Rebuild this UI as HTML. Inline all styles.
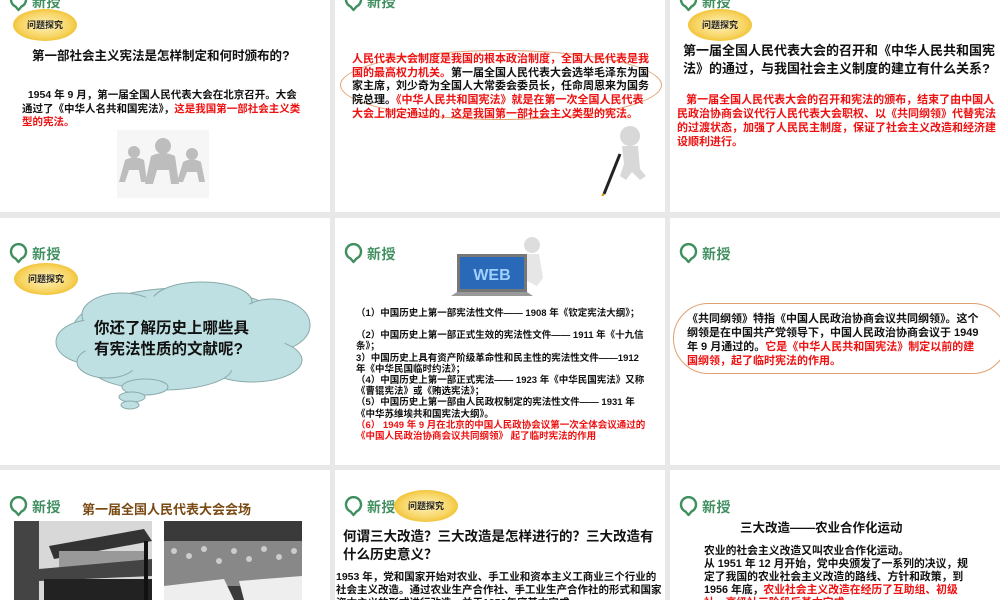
<!DOCTYPE html>
<html><head><meta charset="utf-8"><style>
*{margin:0;padding:0;box-sizing:border-box}
body{width:1000px;height:600px;background:#e8e8e8;position:relative;overflow:hidden;font-family:"Liberation Sans","Noto Sans CJK SC",sans-serif;font-weight:bold;color:#111}
.s{position:absolute;background:#fff;overflow:hidden}
.a{position:absolute}
.logo{position:absolute;width:60px;height:22px}
.logo svg{position:absolute;left:0;top:0}
.logo span{position:absolute;left:23px;top:1px;font-size:14px;color:#3f8f5f;letter-spacing:0.5px}
.badge{position:absolute;width:64px;height:32px;border-radius:50%;background:radial-gradient(ellipse at center,#fff3c0 0%,#f7d462 55%,#f0c030 75%,#fff 100%);font-size:9px;text-align:center;line-height:32px;color:#222}
.r{color:#e11}
p{position:absolute}
</style></head><body>

<!-- Slide A -->
<div class="s" style="left:0;top:0;width:330px;height:212px">
 <div class="logo" style="left:9px;top:-9px"><svg width="19" height="21" viewBox="0 0 19 21"><path d="M9.5 19 L6.5 15.5 A7.5 7.5 0 1 1 12.5 15.5 Z" fill="none" stroke="#3f8f5f" stroke-width="2.4" stroke-linejoin="round"/></svg><span>新授</span></div>
 <div class="badge" style="left:13px;top:9px">问题探究</div>
 <p style="left:32px;top:45px;font-size:12.5px;white-space:nowrap">第一部社会主义宪法是怎样制定和何时颁布的?</p>
 <p style="left:22px;top:89px;width:285px;font-size:10.5px;line-height:13.5px">&nbsp;&nbsp;1954 年 9 月，第一届全国人民代表大会在北京召开。大会通过了《中华人名共和国宪法》，<span class="r">这是我国第一部社会主义类型的宪法。</span></p>
 <svg class="a" style="left:117px;top:130px" width="92" height="68" viewBox="0 0 92 68"><rect width="92" height="68" fill="#f6f6f6"/>
 <g fill="#bdbdbd"><circle cx="17" cy="22" r="6"/><path d="M8 30 Q17 25 27 30 L30 52 L24 52 L22 40 L12 40 L8 52 L2 52 Z"/>
 <circle cx="46" cy="16" r="8"/><path d="M34 26 Q46 20 58 26 L62 54 L54 54 L52 40 L40 40 L36 54 L28 54 Z"/>
 <circle cx="75" cy="24" r="6"/><path d="M66 32 Q75 27 84 32 L88 52 L82 52 L80 42 L70 42 L66 52 L60 52 Z"/></g></svg>
</div>

<!-- Slide B -->
<div class="s" style="left:335px;top:0;width:330px;height:212px">
 <div class="logo" style="left:9px;top:-9px"><svg width="19" height="21" viewBox="0 0 19 21"><path d="M9.5 19 L6.5 15.5 A7.5 7.5 0 1 1 12.5 15.5 Z" fill="none" stroke="#3f8f5f" stroke-width="2.4" stroke-linejoin="round"/></svg><span>新授</span></div>
 <div class="a" style="left:5px;top:50px;width:322px;height:70px;border:1px solid #e0a070;border-radius:50%"></div>
 <p style="left:17px;top:53px;width:300px;font-size:11px;line-height:13.7px"><span class="r">人民代表大会制度是我国的根本政治制度，全国人民代表是我国的最高权力机关。</span>第一届全国人民代表大会选举毛泽东为国家主席，刘少奇为全国人大常委会委员长，任命周恩来为国务院总理。<span class="r">《中华人民共和国宪法》就是在第一次全国人民代表大会上制定通过的，这是我国第一部社会主义类型的宪法。</span></p>
 <svg class="a" style="left:265px;top:124px" width="50" height="72" viewBox="0 0 50 72"><g fill="#d8d8d8"><circle cx="30" cy="12" r="10"/><path d="M22 22 L38 22 L40 45 L46 52 L40 56 L32 48 L26 56 L20 52 L24 40 Z"/></g><path d="M20 30 L4 70" stroke="#222" stroke-width="3"/><path d="M4 70 L2 72" stroke="#c90" stroke-width="2"/></svg>
</div>

<!-- Slide C -->
<div class="s" style="left:670px;top:0;width:330px;height:212px">
 <div class="logo" style="left:9px;top:-9px"><svg width="19" height="21" viewBox="0 0 19 21"><path d="M9.5 19 L6.5 15.5 A7.5 7.5 0 1 1 12.5 15.5 Z" fill="none" stroke="#3f8f5f" stroke-width="2.4" stroke-linejoin="round"/></svg><span>新授</span></div>
 <div class="badge" style="left:18px;top:9px">问题探究</div>
 <p style="left:13px;top:42px;width:312px;font-size:13px;line-height:18px">第一届全国人民代表大会的召开和《中华人民共和国宪法》的通过，与我国社会主义制度的建立有什么关系?</p>
 <p class="r" style="left:7px;top:93px;width:322px;font-size:11px;line-height:14px">&nbsp;&nbsp;&nbsp;第一届全国人民代表大会的召开和宪法的颁布，结束了由中国人民政治协商会议代行人民代表大会职权、以《共同纲领》代替宪法的过渡状态，加强了人民民主制度，保证了社会主义改造和经济建设顺利进行。</p>
</div>

<!-- Slide D -->
<div class="s" style="left:0;top:218px;width:330px;height:247px">
 <div class="logo" style="left:9px;top:25px"><svg width="19" height="21" viewBox="0 0 19 21"><path d="M9.5 19 L6.5 15.5 A7.5 7.5 0 1 1 12.5 15.5 Z" fill="none" stroke="#3f8f5f" stroke-width="2.4" stroke-linejoin="round"/></svg><span>新授</span></div>
 <div class="badge" style="left:14px;top:45px">问题探究</div>
 <svg class="a" style="left:52px;top:62px" width="262" height="132" viewBox="0 0 262 132"><g fill="#bfe0e2" stroke="#8aa" stroke-width="1">
 <ellipse cx="130" cy="52" rx="110" ry="44"/><ellipse cx="70" cy="35" rx="40" ry="22"/><ellipse cx="150" cy="22" rx="50" ry="20"/><ellipse cx="220" cy="45" rx="38" ry="26"/><ellipse cx="40" cy="62" rx="36" ry="22"/><ellipse cx="200" cy="80" rx="50" ry="22"/><ellipse cx="110" cy="88" rx="70" ry="22"/><ellipse cx="55" cy="82" rx="30" ry="16"/>
 <ellipse cx="93" cy="107" rx="23" ry="8"/><ellipse cx="80" cy="117" rx="13" ry="5"/><ellipse cx="78" cy="125" rx="9" ry="4"/></g>
 <ellipse cx="130" cy="55" rx="105" ry="40" fill="#bfe0e2"/></svg>
 <p style="left:94px;top:100px;font-size:15.5px;line-height:21px;width:170px">你还了解历史上哪些具有宪法性质的文献呢?</p>
</div>

<!-- Slide E -->
<div class="s" style="left:335px;top:218px;width:330px;height:247px">
 <div class="logo" style="left:9px;top:25px"><svg width="19" height="21" viewBox="0 0 19 21"><path d="M9.5 19 L6.5 15.5 A7.5 7.5 0 1 1 12.5 15.5 Z" fill="none" stroke="#3f8f5f" stroke-width="2.4" stroke-linejoin="round"/></svg><span>新授</span></div>
 <svg class="a" style="left:112px;top:18px" width="108" height="62" viewBox="0 0 108 62"><circle cx="85" cy="9" r="8" fill="#ddd"/><path d="M76 18 L92 18 L96 42 L90 50 L78 44 Z" fill="#e6e6e6"/><rect x="10" y="18" width="70" height="38" fill="#777"/><rect x="13" y="21" width="64" height="32" fill="#2a68b8"/><text x="45" y="44" font-size="16" font-family="Liberation Sans" font-weight="bold" fill="#9fd0ff" text-anchor="middle">WEB</text><path d="M4 60 L86 60 L80 56 L10 56 Z" fill="#999"/></svg>
 <div class="a" style="left:21px;top:90px;width:290px;font-size:9.5px;line-height:11.2px">
 <div>（1）中国历史上第一部宪法性文件—— 1908 年《钦定宪法大纲》；</div><div style="height:11px"></div>
 <div>（2）中国历史上第一部正式生效的宪法性文件—— 1911 年《十九信条》；</div>
 <div>3）中国历史上具有资产阶级革命性和民主性的宪法性文件——1912 年《中华民国临时约法》；</div>
 <div>（4）中国历史上第一部正式宪法—— 1923 年《中华民国宪法》又称《曹锟宪法》或《贿选宪法》；</div>
 <div>（5）中国历史上第一部由人民政权制定的宪法性文件—— 1931 年《中华苏维埃共和国宪法大纲》。</div>
 <div class="r">（6） 1949 年 9 月在北京的中国人民政协会议第一次全体会议通过的《中国人民政治协商会议共同纲领》 起了临时宪法的作用</div></div>
</div>

<!-- Slide F -->
<div class="s" style="left:670px;top:218px;width:330px;height:247px">
 <div class="logo" style="left:9px;top:25px"><svg width="19" height="21" viewBox="0 0 19 21"><path d="M9.5 19 L6.5 15.5 A7.5 7.5 0 1 1 12.5 15.5 Z" fill="none" stroke="#3f8f5f" stroke-width="2.4" stroke-linejoin="round"/></svg><span>新授</span></div>
 <div class="a" style="left:3px;top:85px;width:335px;height:71px;border:1px solid #e0a070;border-radius:36px"></div>
 <p style="left:17px;top:94px;width:298px;font-size:11px;line-height:14px">《共同纲领》特指《中国人民政治协商会议共同纲领》。这个纲领是在中国共产党领导下，中国人民政治协商会议于 1949 年 9 月通过的。<span class="r">它是《中华人民共和国宪法》制定以前的建国纲领，起了临时宪法的作用。</span></p>
</div>

<!-- Slide G -->
<div class="s" style="left:0;top:470px;width:330px;height:130px">
 <div class="logo" style="left:9px;top:26px"><svg width="19" height="21" viewBox="0 0 19 21"><path d="M9.5 19 L6.5 15.5 A7.5 7.5 0 1 1 12.5 15.5 Z" fill="none" stroke="#3f8f5f" stroke-width="2.4" stroke-linejoin="round"/></svg><span>新授</span></div>
 <p style="left:82px;top:29px;font-size:13px;color:#7a4a12;white-space:nowrap">第一届全国人民代表大会会场</p>
 <svg class="a" style="left:14px;top:51px" width="138" height="79" viewBox="0 0 138 79"><rect width="138" height="79" fill="#d8d8d8"/><rect x="0" y="0" width="25" height="79" fill="#444"/><path d="M35 25 L130 8 L138 20 L40 38 Z" fill="#333"/><rect x="45" y="30" width="85" height="20" fill="#999"/><path d="M25 48 L138 38 L138 55 L25 60 Z" fill="#444"/><rect x="30" y="58" width="108" height="21" fill="#222"/><rect x="130" y="20" width="4" height="59" fill="#111"/></svg>
 <svg class="a" style="left:164px;top:51px" width="138" height="79" viewBox="0 0 138 79"><rect width="138" height="79" fill="#3a3a3a"/><rect y="20" width="138" height="45" fill="#888"/><g fill="#ccc"><circle cx="10" cy="30" r="3"/><circle cx="25" cy="35" r="3"/><circle cx="40" cy="28" r="3"/><circle cx="55" cy="40" r="3"/><circle cx="70" cy="30" r="3"/><circle cx="85" cy="38" r="3"/><circle cx="100" cy="28" r="3"/><circle cx="115" cy="36" r="3"/><circle cx="130" cy="30" r="3"/></g><path d="M0 65 L60 58 L70 79 L0 79 Z" fill="#eee"/><path d="M75 60 L138 55 L138 79 L80 79 Z" fill="#eee"/></svg>
</div>

<!-- Slide H -->
<div class="s" style="left:335px;top:470px;width:330px;height:130px">
 <div class="logo" style="left:9px;top:26px"><svg width="19" height="21" viewBox="0 0 19 21"><path d="M9.5 19 L6.5 15.5 A7.5 7.5 0 1 1 12.5 15.5 Z" fill="none" stroke="#3f8f5f" stroke-width="2.4" stroke-linejoin="round"/></svg><span>新授</span></div>
 <div class="badge" style="left:59px;top:20px">问题探究</div>
 <p style="left:8px;top:58px;width:318px;font-size:13.5px;line-height:18px">何谓三大改造？三大改造是怎样进行的？三大改造有什么历史意义？</p>
 <p style="left:1px;top:101px;width:326px;font-size:10.5px;line-height:13px">1953 年，党和国家开始对农业、手工业和资本主义工商业三个行业的社会主义改造。通过农业生产合作社、手工业生产合作社的形式和国家资本主义的形式进行改造，并于1956年底基本完成。</p>
</div>

<!-- Slide I -->
<div class="s" style="left:670px;top:470px;width:330px;height:130px">
 <div class="logo" style="left:9px;top:26px"><svg width="19" height="21" viewBox="0 0 19 21"><path d="M9.5 19 L6.5 15.5 A7.5 7.5 0 1 1 12.5 15.5 Z" fill="none" stroke="#3f8f5f" stroke-width="2.4" stroke-linejoin="round"/></svg><span>新授</span></div>
 <p style="left:70px;top:47px;font-size:12.5px;white-space:nowrap">三大改造——农业合作化运动</p>
 <p style="left:34px;top:75px;width:272px;font-size:10.8px;line-height:13px">农业的社会主义改造又叫农业合作化运动。<br>从 1951 年 12 月开始，党中央颁发了一系列的决议，规定了我国的农业社会主义改造的路线、方针和政策，到 1956 年底，<span class="r">农业社会主义改造在经历了互助组、初级社、高级社三阶段后基本完成。</span></p>
</div>
</body></html>
